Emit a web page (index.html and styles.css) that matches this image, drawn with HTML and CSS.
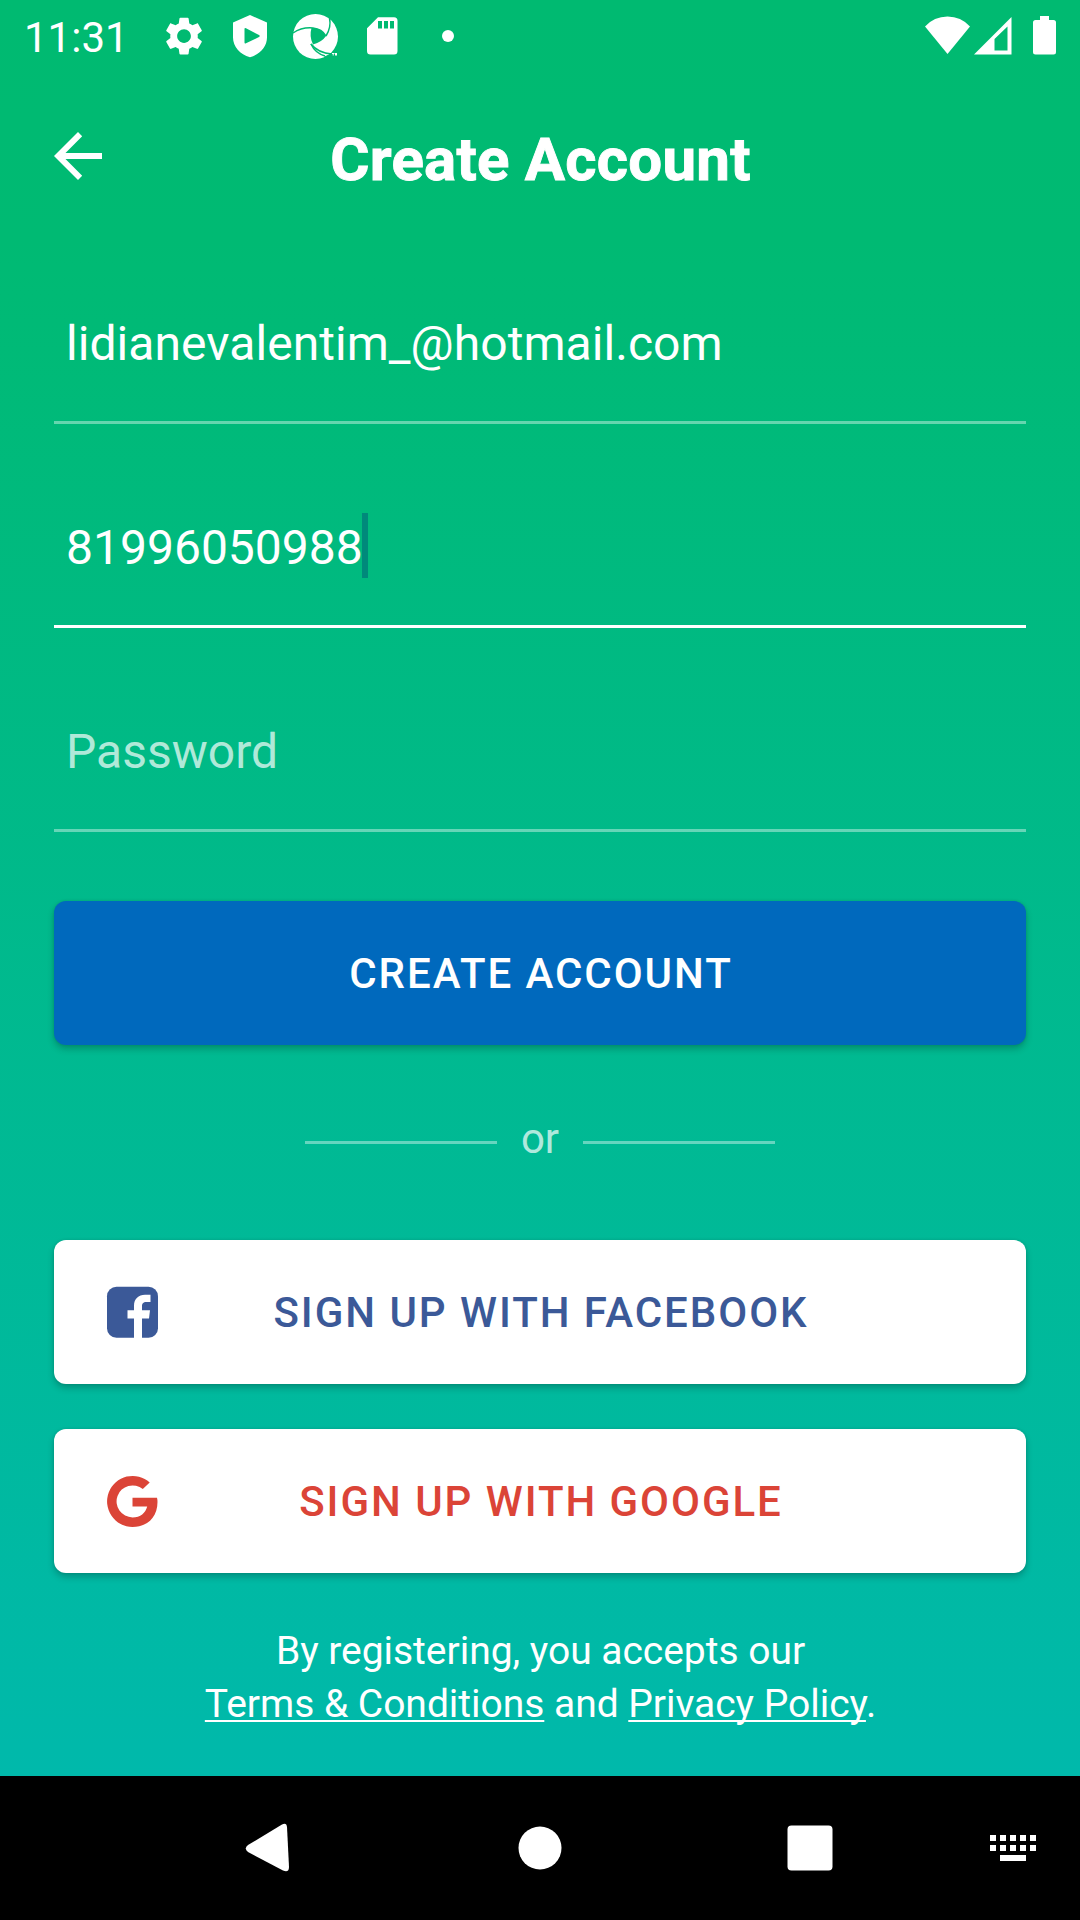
FILE: index.html
```html
<!DOCTYPE html>
<html lang="en">
<head>
<meta charset="utf-8">
<title>Create Account</title>
<link rel="stylesheet" href="styles.css">
</head>
<body>
<div class="screen">
  <header class="status-bar">
    <span class="clock">11:31</span>
    <svg class="status-icons" width="310" height="72" viewBox="150 0 310 72" fill="#fff">
      <g transform="translate(161.1 13.2) scale(1.91)">
        <path d="M19.14 12.94c.04-.3.06-.61.06-.94 0-.32-.02-.64-.07-.94l2.03-1.58c.18-.14.23-.41.12-.61l-1.92-3.32c-.12-.22-.37-.29-.59-.22l-2.39.96c-.5-.38-1.03-.7-1.62-.94L14.4 2.81c-.04-.24-.24-.41-.48-.41h-3.84c-.24 0-.43.17-.47.41L9.25 5.35c-.59.24-1.13.57-1.62.94L5.24 5.33c-.22-.08-.47 0-.59.22L2.74 8.87c-.12.21-.08.47.12.61l2.03 1.58c-.05.3-.09.63-.09.94s.02.64.07.94l-2.03 1.58c-.18.14-.23.41-.12.61l1.92 3.32c.12.22.37.29.59.22l2.39-.96c.5.38 1.03.7 1.62.94l.36 2.54c.05.24.24.41.48.41h3.84c.24 0 .44-.17.47-.41l.36-2.54c.59-.24 1.13-.56 1.62-.94l2.39.96c.22.08.47 0 .59-.22l1.92-3.32c.12-.22.07-.47-.12-.61l-2.01-1.58zM12 15.6c-1.98 0-3.6-1.62-3.6-3.6s1.62-3.6 3.6-3.6 3.6 1.62 3.6 3.6-1.62 3.6-3.6 3.6z"/>
      </g>
      <path fill-rule="evenodd" d="M250 15l17 7.500v15c0 9-7 17-17 19.700-10-2.700-17-10.700-17-19.700v-15zM244.500 29v13.500q0 1.500 1.500.8l13-6.300q1.500-1 0-2l-13-6.700q-1.500-.6-1.500.7z"/>
      <circle cx="315.500" cy="36.500" r="22.500"/>
      <g fill="none" stroke="#00ba72" stroke-width="1.500">
        <path d="M293 33q9-6 20-5 9 1 13 8"/>
        <path d="M329.500 18q2 9-3.500 18"/>
        <path d="M311 44q4 9 14 12"/>
        <path d="M311 44q7 9 21 10"/>
      </g>
      <path fill="#00ba72" d="M311.500 28q9-.5 14.500 8-4 6-13 8.500-4-8-1.500-16.500zM323.500 60l1-3.500 8-3.500 5 6z"/>
      <path d="M332 53h2.500v1h-.8v1.500h-1V54h-.7zm3 0h2v2.500h-2z"/>
      <path fill-rule="evenodd" d="M378 17.300h16a3.500 3.500 0 0 1 3.500 3.500V51a3.500 3.500 0 0 1-3.500 3.500h-23.500A3.500 3.500 0 0 1 367 51V28.300zM378 21v7.500h4V21zm6 0v7.500h4V21zm6 0v7.500h4V21z"/>
      <circle cx="448" cy="36" r="6"/>
    </svg>
    <svg class="system-icons" width="150" height="72" viewBox="920 0 150 72" fill="#fff">
      <path d="M947.500 54L925 26.500Q934 16.500 947.500 16.500T970 26.500z"/>
      <path fill-rule="evenodd" d="M1011.500 17v37.500H974zM1007.500 26.500L994.500 39v11.500h13z"/>
      <path d="M1040 16h9v4h4.500q2.500 0 2.500 2.500V52q0 2.500-2.500 2.500h-18q-2.500 0-2.500-2.500V22.500q0-2.500 2.500-2.500h4.500z"/>
    </svg>
  </header>

  <main class="content">
    <div class="title-bar">
      <svg class="back" width="48" height="48" viewBox="0 0 48 48" fill="#fff"><path d="M48 21v6H11.500l16.700 16.700L24 48 0 24 24 0l4.200 4.200L11.500 21z"/></svg>
      <h1 class="title">Create Account</h1>
    </div>

    <form class="form">
      <div class="field">lidianevalentim_@hotmail.com</div>
      <div class="field field-active">81996050988<span class="caret"></span></div>
      <div class="field field-empty">Password</div>
      <button class="button button-primary" type="button"><span class="label">CREATE ACCOUNT</span></button>
    </form>

    <div class="divider"><span class="rule"></span><span class="or">or</span><span class="rule"></span></div>

    <div class="social">
      <button class="button button-facebook" type="button">
        <svg class="brand" width="52" height="52" viewBox="-.5 -.2 52 52"><rect x=".5" y=".5" width="51" height="51" rx="9.500" fill="#3b5998"/><path fill="#fff" d="M27.500 52V32.200H21V24h6.500v-4.500c0-7 4.500-11 11-11h5.500v7.300h-4c-3.500 0-4.500 1.700-4.500 4.200v4h8l-1 8.200h-7V52z"/></svg>
        <span class="label">SIGN UP WITH FACEBOOK</span>
      </button>
      <button class="button button-google" type="button">
        <svg class="brand" width="52" height="52" viewBox="-.5 -.4 52 52"><path fill="#db4437" d="M26 22.300h24.500q.5 2 .5 4.200C51 42 40.500 51.500 26 51.500A25.500 25.500 0 1 1 43.200 7.100L36.300 13.700A16 16 0 1 0 26 42c8 0 13-4.500 14.700-11H26z"/></svg>
        <span class="label">SIGN UP WITH GOOGLE</span>
      </button>
    </div>

    <p class="legal">By registering, you accepts our<br><a class="link">Terms &amp; Conditions</a> and <a class="link">Privacy Policy</a>.</p>
  </main>

  <nav class="nav-bar">
    <svg width="1080" height="144" viewBox="0 1776 1080 144" fill="#fff">
      <path d="M248 1845L282 1824.500Q286.500 1822 287 1827L289 1867Q289 1873 283 1870.500L248 1852Q243.500 1848.500 248 1845z"/>
      <circle cx="540" cy="1848" r="21.500"/>
      <rect x="787.500" y="1825.500" width="45" height="45" rx="4"/>
      <path d="M990 1835h6v6h-6zm10 0h6v6h-6zm10 0h6v6h-6zm10 0h6v6h-6zm10 0h6v6h-6zM990 1845h6v6h-6zm10 0h6v6h-6zm10 0h6v6h-6zm10 0h6v6h-6zm10 0h6v6h-6zM1000 1855h26v6h-26z"/>
    </svg>
  </nav>
</div>
</body>
</html>
```
FILE: styles.css
```css
* { box-sizing: border-box; }

body {
  margin: 0;
  font-family: Roboto, "Liberation Sans", sans-serif;
  color: #fff;
}

.screen {
  width: 1080px;
  height: 1920px;
  display: flex;
  flex-direction: column;
  background: linear-gradient(#00ba71, #00ba73 240px, #00b9ab 1776px);
  overflow: hidden;
}

.status-bar {
  height: 72px;
  display: flex;
  padding: 0 10px 0 24px;
}

.clock {
  width: 126px;
  font-size: 42px;
  line-height: 76px;
}

.system-icons { margin-left: auto; }

.content {
  flex: 1;
  padding: 0 54px;
}

.title-bar {
  height: 178px;
  display: grid;
  grid-template-columns: 48px 1fr 48px;
  padding-top: 60px;
}

.title {
  margin: -7px 0 0;
  padding-left: 1px;
  font-size: 60px;
  line-height: 70px;
  font-weight: 700;
  letter-spacing: .25px;
  -webkit-text-stroke: .9px #fff;
  text-align: center;
}

.field {
  height: 204px;
  display: flex;
  align-items: center;
  padding: 0 12px 17px;
  font-size: 48px;
  line-height: 64px;
  letter-spacing: .06px;
  background: linear-gradient(rgba(255, 255, 255, .4), rgba(255, 255, 255, .4)) 0 171px / 100% 3px no-repeat;
}

.field-active {
  letter-spacing: 0;
  background-image: linear-gradient(#fff, #fff);
}

.field-empty {
  letter-spacing: 0;
  color: rgba(255, 255, 255, .7);
}

.caret {
  width: 6px;
  height: 65px;
  margin: 0 0 5px -1px;
  background: #00897b;
}

.button {
  width: 100%;
  height: 144px;
  display: grid;
  grid-template-columns: 52px 1fr 52px;
  align-items: center;
  padding: 0 52px;
  border: 0;
  border-radius: 12px;
  background: #fff;
  box-shadow: 0 4px 7px rgba(0, 0, 0, .22), 0 0 3px rgba(0, 0, 0, .1);
  font: 500 42px/50px Roboto, "Liberation Sans", sans-serif;
  letter-spacing: 1.95px;
}

.label {
  grid-column: 2;
  padding: 2px 0 0 2px;
  white-space: nowrap;
}

.button-primary { margin-top: 39px; background: #0069bd; color: #fff; }
.button-facebook { color: #3b5998; }
.button-google { color: #db4437; }

.divider {
  height: 195px;
  display: flex;
  justify-content: center;
  align-items: center;
  gap: 24px;
  font-size: 42px;
  line-height: 50px;
  color: rgba(255, 255, 255, .7);
}

.or { margin-top: -7px; }

.rule {
  width: 192px;
  height: 3px;
  background: rgba(255, 255, 255, .4);
}

.social {
  display: grid;
  gap: 45px;
}

.legal {
  margin: 52px 0 0;
  padding-left: 1px;
  font-size: 39px;
  line-height: 53px;
  letter-spacing: -.03px;
  text-align: center;
}

.link {
  text-decoration: underline;
  text-decoration-thickness: 2px;
  text-underline-offset: 3px;
  text-decoration-skip-ink: none;
}

.nav-bar {
  height: 144px;
  background: #000;
}
```
